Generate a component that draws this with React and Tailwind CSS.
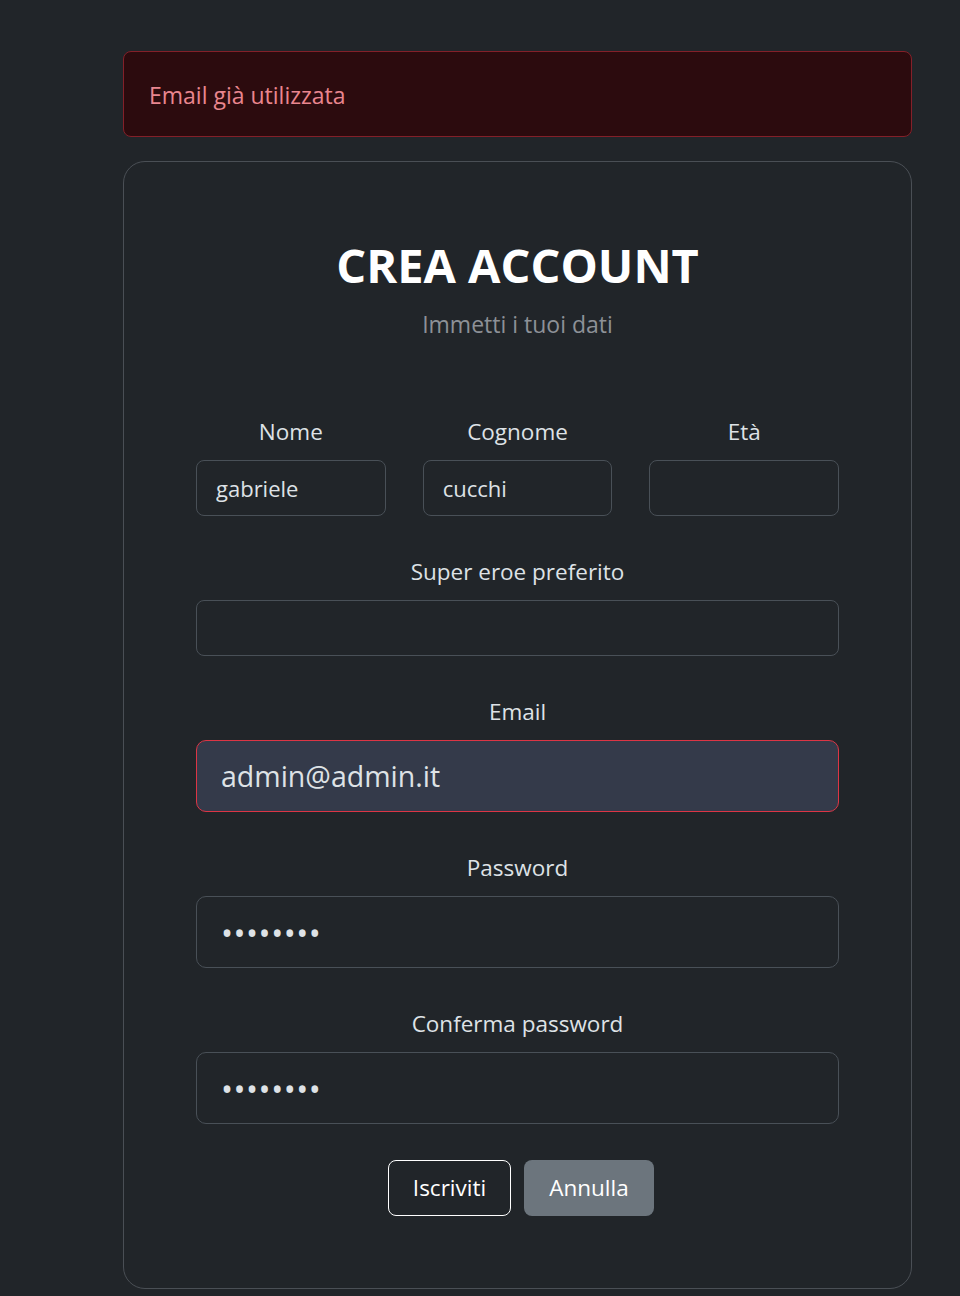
const font = { fontFamily: '"Open Sans", "Noto Sans", sans-serif' };

function Field({ label, value = '', type = 'text', big = false, invalid = false, className = '' }) {
  const size = type === 'password' ? 'text-[32px] tracking-[0.5px]' : big ? 'text-[28.5px]' : 'text-[22px]';
  const base = big
    ? `h-[72px] px-[24px] rounded-[10px] ${size}`
    : `h-[56px] px-[19px] rounded-[8px] ${size}`;
  const tone = invalid ? 'bg-[#343a4a] border-[#dc3545]' : 'bg-[#212529] border-[#495057]';
  return (
    <div className={'flex flex-col ' + className}>
      <label className="text-[22.5px] leading-[30px] text-[#dee2e6] text-center">{label}</label>
      <input
        type={type}
        readOnly
        value={value}
        className={`mt-[13px] w-full border ${tone} ${base} text-[#dee2e6] outline-none`}
        style={font}
      />
    </div>
  );
}

export default function App() {
  return (
    <div className="min-h-[1296px] bg-[#212529] pt-[51px] pb-[8px]" style={font}>
      <div className="ml-[123px] w-[789px]">
        <div className="h-[86px] flex items-center px-[25px] pt-[3px] bg-[#2c0b0e] border border-[#842029] rounded-[8px] text-[23px] text-[#ea868f]">
          Email già utilizzata
        </div>

        <div className="mt-[24px] border border-[#4a4f55] rounded-[22px] px-[72px] pt-[74px] pb-[72px]">
          <h1 className="text-[47px] leading-[58px] font-bold text-white text-center">CREA ACCOUNT</h1>
          <p className="mt-[15px] text-[23px] leading-[30px] text-[#8d9197] text-center">Immetti i tuoi dati</p>

          <div className="mt-[78px] grid grid-cols-3 gap-[37px]">
            <Field label="Nome" value="gabriele" />
            <Field label="Cognome" value="cucchi" />
            <Field label="Età" />
          </div>

          <Field label="Super eroe preferito" className="mt-[41px]" />
          <Field label="Email" value="admin@admin.it" big invalid className="mt-[41px]" />
          <Field label="Password" type="password" value="password" big className="mt-[41px]" />
          <Field label="Conferma password" type="password" value="password" big className="mt-[41px]" />

          <div className="mt-[36px] pl-[7px] flex justify-center gap-[13px]">
            <button className="h-[56px] w-[123px] border border-white rounded-[8px] text-[22.5px] text-white bg-transparent" style={font}>
              Iscriviti
            </button>
            <button className="h-[56px] w-[130px] rounded-[8px] text-[22.5px] text-white bg-[#6c757d]" style={font}>
              Annulla
            </button>
          </div>
        </div>
      </div>
    </div>
  );
}
